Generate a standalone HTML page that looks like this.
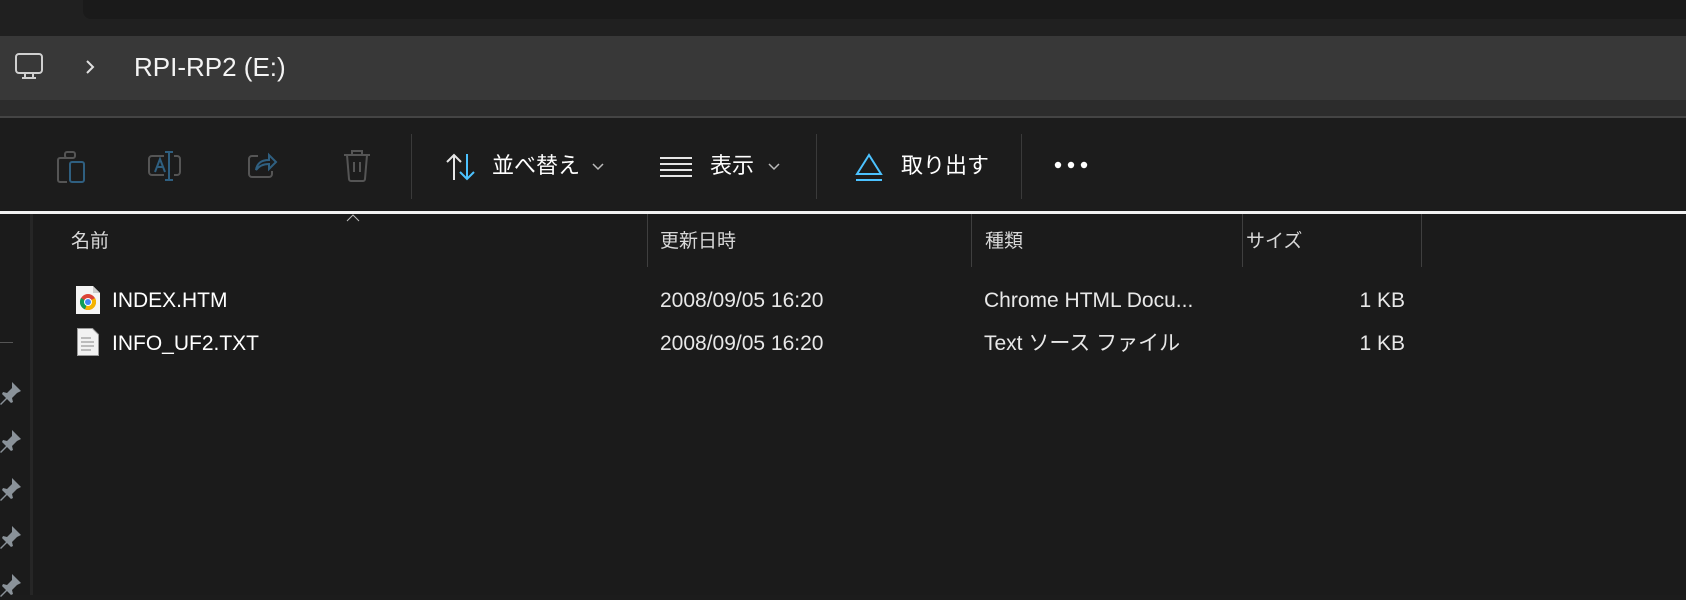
<!DOCTYPE html>
<html><head><meta charset="utf-8"><style>
*{margin:0;padding:0;box-sizing:border-box}
body{width:1686px;height:595px;background:#1c1c1c;overflow:hidden;position:relative;font-family:"Liberation Sans","Noto Sans CJK JP",sans-serif;color:#fff}
.a{position:absolute}
.t{position:absolute;white-space:nowrap;font-size:21px;line-height:24px;color:#fff}
.h{position:absolute;white-space:nowrap;font-size:19px;line-height:24px;color:#d8d8d8}
.sep{position:absolute;width:1px;background:#3a3a3a}
</style></head><body>
<div class="a" style="left:0;top:0;width:1686px;height:36px;background:#202020"></div>
<div class="a" style="left:83px;top:0;width:1603px;height:19px;background:#1a1a1a;border-radius:0 0 0 8px"></div>
<div class="a" style="left:0;top:36px;width:1686px;height:64px;background:#383838"></div>
<div class="a" style="left:0;top:100px;width:1686px;height:16px;background:#2c2c2c"></div>
<div class="a" style="left:0;top:116px;width:1686px;height:2px;background:#444"></div>
<div class="a" style="left:0;top:118px;width:1686px;height:93px;background:#1c1c1c"></div>
<div class="a" style="left:0;top:211px;width:1686px;height:3px;background:#f2f2f2"></div>
<div class="a" style="left:0;top:214px;width:1686px;height:381px;background:#1b1b1b"></div>

<!-- address bar -->
<svg class="a" style="left:14px;top:52px" width="30" height="30" viewBox="0 0 30 30" fill="none" stroke="#d0d0d0" stroke-width="2"><rect x="2" y="2" width="26" height="19" rx="3"/><path d="M11 21v4M19 21v4M8 26h14"/></svg>
<svg class="a" style="left:84px;top:58px" width="12" height="18" viewBox="0 0 12 18" fill="none" stroke="#e0e0e0" stroke-width="2"><path d="M3 3l6 6-6 6"/></svg>
<div class="t" style="left:134px;top:52px;font-size:26px;line-height:30px;color:#f4f4f4">RPI-RP2 (E:)</div>

<!-- toolbar icons -->
<svg class="a" style="left:55px;top:148px" width="32" height="36" viewBox="0 0 32 36" fill="none" stroke-width="2"><path d="M14 10H5a2 2 0 0 0-2 2v20a2 2 0 0 0 2 2h7" stroke="#555"/><rect x="10" y="4" width="10" height="6" rx="2" stroke="#555"/><rect x="15" y="14" width="14" height="20" rx="2" stroke="#2f5f80"/></svg>
<svg class="a" style="left:147px;top:150px" width="36" height="32" viewBox="0 0 36 32" fill="none" stroke-width="2"><path d="M17 6H5a3 3 0 0 0-3 3v13a3 3 0 0 0 3 3h12M27 6h3a3 3 0 0 1 3 3v13a3 3 0 0 1-3 3h-3" stroke="#555"/><path d="M22 2v28M18 2h8M18 30h8" stroke="#2f5f80"/><path d="M8 22l5-13 5 13M10 17h6" stroke="#2f5f80"/></svg>
<svg class="a" style="left:246px;top:150px" width="32" height="30" viewBox="0 0 32 30" fill="none" stroke-width="2"><path d="M12 6H6a3 3 0 0 0-3 3v15a3 3 0 0 0 3 3h17a3 3 0 0 0 3-3v-3" stroke="#555"/><path d="M10 20c1-7 6-10 13-10V5l7 7-7 7v-5c-6 0-10 2-13 6z" stroke="#2f5f80"/></svg>
<svg class="a" style="left:342px;top:148px" width="30" height="34" viewBox="0 0 30 34" fill="none" stroke="#555" stroke-width="2"><path d="M2 7h26M10 7V3h10v4M5 7l2 24a2 2 0 0 0 2 2h12a2 2 0 0 0 2-2l2-24M12 14v10M18 14v10"/></svg>
<div class="sep" style="left:411px;top:134px;height:65px"></div>
<svg class="a" style="left:445px;top:152px" width="32" height="30" viewBox="0 0 32 30" fill="none" stroke-width="2"><path d="M9 28V3M2 10l7-7 7 7" stroke="#e6e6e6"/><path d="M22 2v25M15 20l7 7 7-7" stroke="#4cc2ff"/></svg>
<div class="t" style="left:492px;top:154px;font-size:22px">並べ替え</div>
<svg class="a" style="left:592px;top:163px" width="12" height="8" viewBox="0 0 12 8" fill="none" stroke="#bbb" stroke-width="1.5"><path d="M1 1l5 5 5-5"/></svg>
<svg class="a" style="left:660px;top:156px" width="32" height="22" viewBox="0 0 32 22" stroke="#e6e6e6" stroke-width="2"><path d="M0 2h32M0 8h32M0 14h32M0 20h32"/></svg>
<div class="t" style="left:710px;top:154px;font-size:22px">表示</div>
<svg class="a" style="left:768px;top:163px" width="12" height="8" viewBox="0 0 12 8" fill="none" stroke="#bbb" stroke-width="1.5"><path d="M1 1l5 5 5-5"/></svg>
<div class="sep" style="left:816px;top:134px;height:65px"></div>
<svg class="a" style="left:854px;top:152px" width="30" height="30" viewBox="0 0 30 30" fill="none" stroke="#4cc2ff" stroke-width="2"><path d="M15 3L3 22h24z"/><path d="M2 28h26"/></svg>
<div class="t" style="left:901px;top:154px;font-size:22px">取り出す</div>
<div class="sep" style="left:1021px;top:134px;height:65px"></div>
<svg class="a" style="left:1054px;top:161px" width="36" height="8" viewBox="0 0 36 8" fill="#fff"><circle cx="4" cy="4" r="3.2"/><circle cx="17" cy="4" r="3.2"/><circle cx="30" cy="4" r="3.2"/></svg>

<!-- left pane -->
<div class="a" style="left:30px;top:214px;width:3px;height:381px;background:#262626"></div>
<div class="a" style="left:0;top:342px;width:13px;height:1px;background:#555"></div>
<svg class="a" style="left:0;top:380px" width="24" height="220" viewBox="0 0 24 220" fill="#8a9299">
<g id="p"><path d="M12 2l9 9-4 2-5 5 1 4-2 1-4-4-6 6-1-1 6-6-4-4 1-2 4 1 5-5z"/></g>
<use href="#p" y="48"/><use href="#p" y="96"/><use href="#p" y="144"/><use href="#p" y="192"/>
</svg>

<!-- headers -->
<svg class="a" style="left:346px;top:214px" width="14" height="8" viewBox="0 0 14 8" fill="none" stroke="#bbb" stroke-width="1"><path d="M1 7l6-6 6 6"/></svg>
<div class="h" style="left:71px;top:230px">名前</div>
<div class="sep" style="left:647px;top:214px;height:53px;background:#3f3f3f"></div>
<div class="h" style="left:660px;top:230px">更新日時</div>
<div class="sep" style="left:971px;top:214px;height:53px;background:#3f3f3f"></div>
<div class="h" style="left:985px;top:230px">種類</div>
<div class="sep" style="left:1242px;top:214px;height:53px;background:#3f3f3f"></div>
<div class="h" style="left:1246px;top:230px">サイズ</div>
<div class="sep" style="left:1421px;top:214px;height:53px;background:#3f3f3f"></div>

<!-- rows -->
<svg class="a" style="left:76px;top:286px" width="24" height="28" viewBox="0 0 24 28"><path d="M0 0h17l7 7v21H0z" fill="#f4f4f4"/><path d="M17 0v7h7" fill="#ccc"/><circle cx="12" cy="16" r="8" fill="#db4437"/><path d="M12 16L5 12a8 8 0 0 0 4 11.4z" fill="#0f9d58"/><path d="M12 16l7-4a8 8 0 0 1-10 11.4z" fill="#f4b400"/><circle cx="12" cy="16" r="4" fill="#fff"/><circle cx="12" cy="16" r="3" fill="#4285f4"/></svg>
<div class="t" style="left:112px;top:289px">INDEX.HTM</div>
<div class="t" style="left:660px;top:289px;color:#e8e8e8">2008/09/05 16:20</div>
<div class="t" style="left:984px;top:289px;color:#e8e8e8">Chrome HTML Docu...</div>
<div class="t" style="left:1325px;top:289px;color:#e8e8e8;width:80px;text-align:right">1 KB</div>

<svg class="a" style="left:77px;top:328px" width="22" height="28" viewBox="0 0 22 28"><path d="M0.5 .5h15l6 6v21H.5z" fill="#f2f2f2" stroke="#999"/><path d="M4 10h10M4 14h13M4 18h13M4 22h10" stroke="#aaa" stroke-width="1.5"/></svg>
<div class="t" style="left:112px;top:332px">INFO_UF2.TXT</div>
<div class="t" style="left:660px;top:332px;color:#e8e8e8">2008/09/05 16:20</div>
<div class="t" style="left:984px;top:332px;color:#e8e8e8">Text ソース ファイル</div>
<div class="t" style="left:1325px;top:332px;color:#e8e8e8;width:80px;text-align:right">1 KB</div>
</body></html>
